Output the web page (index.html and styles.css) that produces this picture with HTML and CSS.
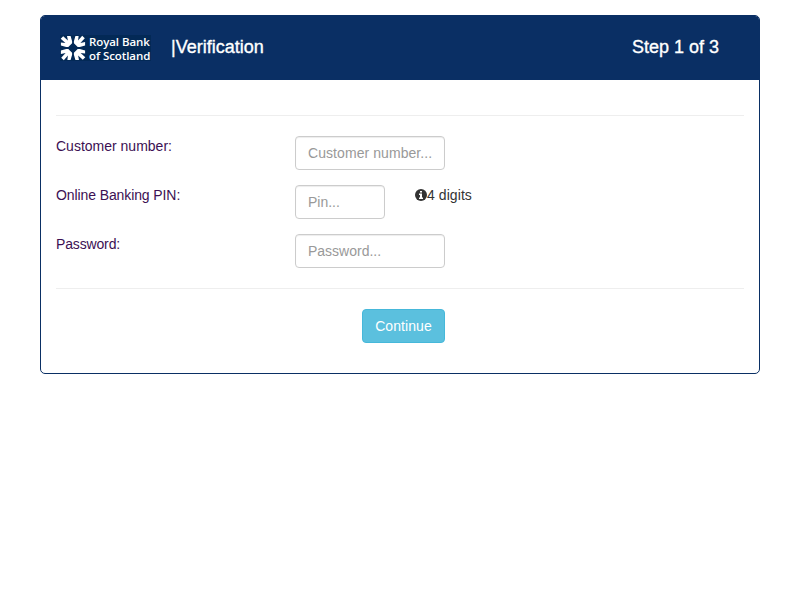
FILE: index.html
```html
<!DOCTYPE html>
<html lang="en">
<head>
<meta charset="utf-8">
<title>Verification layout</title>
<link rel="stylesheet" href="styles.css">
</head>
<body>
<main class="panel">
  <header class="panel-heading">
    <div class="brand">
      <svg class="brand-mark" viewBox="0 0 26 26" aria-hidden="true">
        <g fill="#fff">
          <path id="arm" d="M.7 3.8L3.2 1.2L7.9 5.6L7 .9H10.6L12.1 6.2V8.3L8.3 12.1H6.2L.9 10.6V7.4L5.4 7.9Z"/>
          <use href="#arm" transform="rotate(90 13 13)"/>
          <use href="#arm" transform="rotate(180 13 13)"/>
          <use href="#arm" transform="rotate(270 13 13)"/>
        </g>
      </svg>
      <div class="brand-name">Royal Bank<br>of Scotland</div>
    </div>
    <div class="title">|Verification</div>
    <div class="step">Step 1 of 3</div>
  </header>
  <div class="panel-body">
    <hr>
    <div class="row">
      <div class="label">Customer number:</div>
      <div class="field field-customer">Customer number...</div>
    </div>
    <div class="row">
      <div class="label label-pin">Online Banking PIN:</div>
      <div class="field field-short">Pin...</div>
      <div class="hint"><svg class="info" viewBox="0 0 12 12" aria-hidden="true"><circle cx="6" cy="6" r="6" fill="#333"/><path d="M5 2h2v1.6H5zM4 4.6h3v4h1V10H4V8.6h1V6H4z" fill="#fff"/></svg>4 digits</div>
    </div>
    <div class="row">
      <div class="label label-password">Password:</div>
      <div class="field">Password...</div>
    </div>
    <hr class="bottom-rule">
    <div class="button">Continue</div>
  </div>
</main>
</body>
</html>
```
FILE: styles.css
```css
* { box-sizing: border-box; }
body {
  margin: 0;
  padding: 15px 40px;
  background: #fff;
  color: #333;
  font: 14px/20px "Liberation Sans", Arial, sans-serif;
}
.panel {
  height: 359px;
  border: 1px solid #0a2f64;
  border-radius: 5px;
  overflow: hidden;
}
.panel-heading {
  display: flex;
  height: 64px;
  padding: 0 40px 0 19px;
  background: #0a2f64;
  color: #fff;
  font-size: 18px;
}
.brand {
  display: flex;
  width: 111px;
  padding-top: 19px;
}
.brand-mark {
  width: 26px;
  height: 26px;
  background: #032956;
}
.brand-name {
  width: 65px;
  height: 26px;
  padding-left: 3px;
  background: #032956;
  font: 600 11.5px/14px "Open Sans", sans-serif;
  letter-spacing: -0.08px;
  white-space: nowrap;
}
.title, .step {
  padding-top: 21px;
  -webkit-text-stroke: .35px #fff;
}
.step { margin-left: auto; }
.panel-body { padding: 35px 15px 0; }
hr {
  margin: 0 0 20px;
  border: 0;
  border-top: 1px solid #eee;
}
.row {
  display: flex;
  height: 34px;
  margin-bottom: 15px;
}
.label {
  width: 239px;
  color: #3c1053;
}
.label-pin { letter-spacing: -.1px; }
.label-password { letter-spacing: -.15px; }
.field {
  width: 150px;
  height: 34px;
  padding: 6px 12px;
  border: 1px solid #ccc;
  border-radius: 4px;
  box-shadow: inset 0 1px 1px rgba(0, 0, 0, .075);
  color: #999;
  white-space: nowrap;
}
.field-customer { letter-spacing: .07px; }
.field-short { width: 90px; }
.hint {
  margin-left: 30px;
  letter-spacing: .07px;
}
.info {
  width: 12px;
  height: 12px;
  vertical-align: -1px;
}
.bottom-rule { margin-top: 20px; }
.button {
  width: 83px;
  height: 34px;
  margin-left: 306px;
  padding: 6px 0;
  border: 1px solid #46b8da;
  border-radius: 4px;
  background: #5bc0de;
  color: #fff;
  text-align: center;
  letter-spacing: .07px;
}
```
